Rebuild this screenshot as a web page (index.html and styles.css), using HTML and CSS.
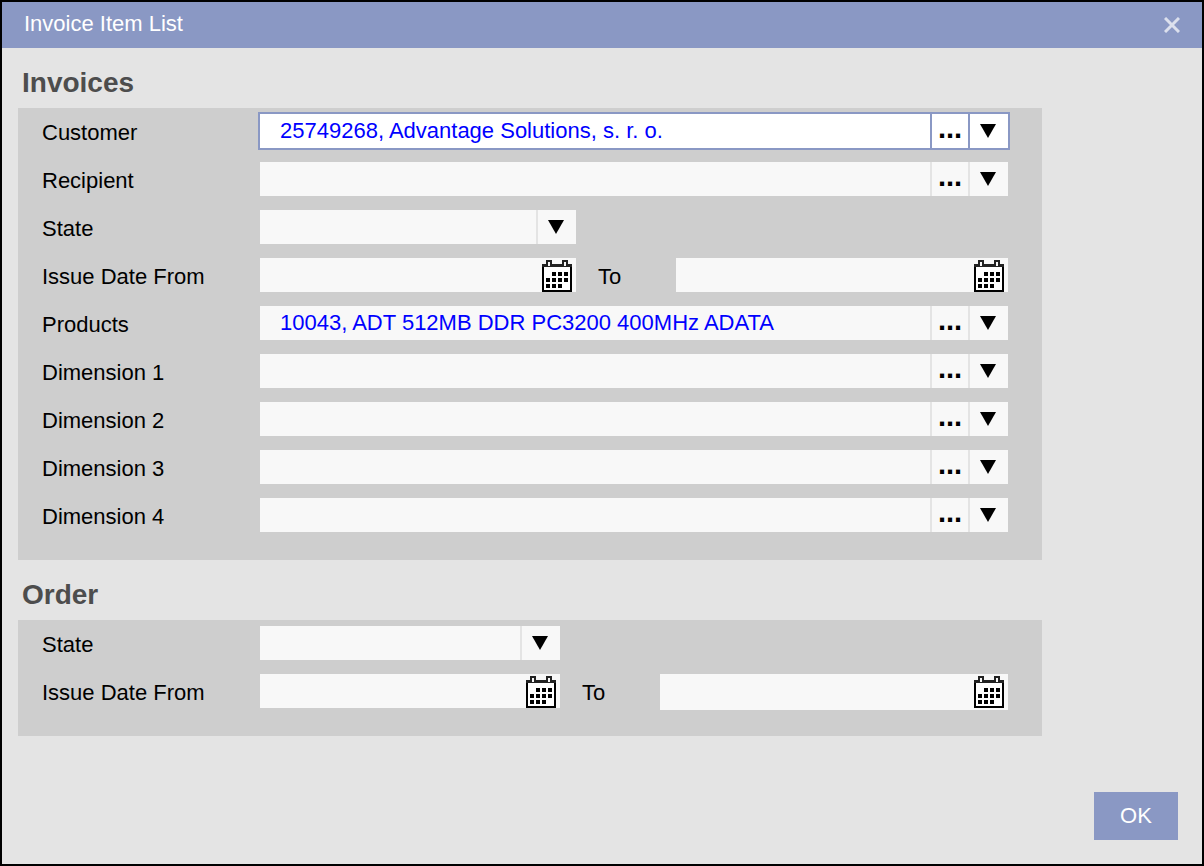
FILE: index.html
```html
<!DOCTYPE html>
<html lang="en">
<head>
<meta charset="utf-8">
<title>Invoice Item List</title>
<link rel="stylesheet" href="styles.css">
</head>
<body>
<svg class="sprites" width="0" height="0" aria-hidden="true">
  <symbol id="cal" viewBox="0 0 30 32">
    <path d="M1 6h28v25H1z" fill="#fff" stroke="#000" stroke-width="2"/>
    <path d="M0 4h30v3H0z" fill="#222"/>
    <path d="M5 6V1h4v5M21 6V1h4v5" fill="#f8f8f8" stroke="#222" stroke-width="2"/>
    <path d="M10 12h4v4h-4zM16 12h4v4h-4zM22 12h4v4h-4zM4 18h4v4H4zM10 18h4v4h-4zM16 18h4v4h-4zM22 18h4v4h-4zM4 24h4v4H4zM10 24h4v4h-4zM16 24h4v4h-4z" fill="#000"/>
  </symbol>
  <symbol id="arrow" viewBox="0 0 16 14">
    <path d="M0 0h16L8 14z" fill="#000"/>
  </symbol>
</svg>
<div class="dialog">
  <header class="titlebar">
    <span class="title">Invoice Item List</span>
    <svg class="close" viewBox="0 0 16 16"><path d="M1 1l14 14M15 1L1 15"/></svg>
  </header>
  <main class="content">
    <h2 class="section-title">Invoices</h2>
    <section class="panel">
      <div class="row">
        <label class="label">Customer</label>
        <div class="field field-full focused">
          <span class="value">25749268, Advantage Solutions, s. r. o.</span>
          <span class="btn dots">...</span>
          <span class="btn arrow"><svg><use href="#arrow"/></svg></span>
        </div>
      </div>
      <div class="row">
        <label class="label">Recipient</label>
        <div class="field field-full">
          <span class="value"></span>
          <span class="btn dots">...</span>
          <span class="btn arrow"><svg><use href="#arrow"/></svg></span>
        </div>
      </div>
      <div class="row">
        <label class="label">State</label>
        <div class="field field-state">
          <span class="value"></span>
          <span class="btn arrow"><svg><use href="#arrow"/></svg></span>
        </div>
      </div>
      <div class="row">
        <label class="label">Issue Date From</label>
        <div class="field field-date">
          <span class="value"></span>
          <svg class="cal"><use href="#cal"/></svg>
        </div>
        <label class="to">To</label>
        <div class="field field-date-to">
          <span class="value"></span>
          <svg class="cal"><use href="#cal"/></svg>
        </div>
      </div>
      <div class="row">
        <label class="label">Products</label>
        <div class="field field-full">
          <span class="value">10043, ADT 512MB DDR PC3200 400MHz ADATA</span>
          <span class="btn dots">...</span>
          <span class="btn arrow"><svg><use href="#arrow"/></svg></span>
        </div>
      </div>
      <div class="row">
        <label class="label">Dimension 1</label>
        <div class="field field-full">
          <span class="value"></span>
          <span class="btn dots">...</span>
          <span class="btn arrow"><svg><use href="#arrow"/></svg></span>
        </div>
      </div>
      <div class="row">
        <label class="label">Dimension 2</label>
        <div class="field field-full">
          <span class="value"></span>
          <span class="btn dots">...</span>
          <span class="btn arrow"><svg><use href="#arrow"/></svg></span>
        </div>
      </div>
      <div class="row">
        <label class="label">Dimension 3</label>
        <div class="field field-full">
          <span class="value"></span>
          <span class="btn dots">...</span>
          <span class="btn arrow"><svg><use href="#arrow"/></svg></span>
        </div>
      </div>
      <div class="row">
        <label class="label">Dimension 4</label>
        <div class="field field-full">
          <span class="value"></span>
          <span class="btn dots">...</span>
          <span class="btn arrow"><svg><use href="#arrow"/></svg></span>
        </div>
      </div>
    </section>
    <h2 class="section-title">Order</h2>
    <section class="panel">
      <div class="row">
        <label class="label">State</label>
        <div class="field field-state-order">
          <span class="value"></span>
          <span class="btn arrow"><svg><use href="#arrow"/></svg></span>
        </div>
      </div>
      <div class="row">
        <label class="label">Issue Date From</label>
        <div class="field field-date-order">
          <span class="value"></span>
          <svg class="cal"><use href="#cal"/></svg>
        </div>
        <label class="to">To</label>
        <div class="field field-date-order-to">
          <span class="value"></span>
          <svg class="cal"><use href="#cal"/></svg>
        </div>
      </div>
    </section>
  </main>
  <footer class="footer">
    <button class="ok" type="button">OK</button>
  </footer>
</div>
</body>
</html>
```
FILE: styles.css
```css
* { box-sizing: border-box; }
html, body { margin: 0; height: 100%; overflow: hidden; }
body { font-family: "Liberation Sans", Arial, sans-serif; font-size: 22px; color: #000; }
.sprites { position: absolute; }

.dialog {
  width: 1204px;
  height: 866px;
  border: 2px solid #000;
  background: #e4e4e4;
  display: flex;
  flex-direction: column;
}
.titlebar {
  height: 46px;
  flex: none;
  background: #8a98c4;
  color: #fff;
  display: flex;
  align-items: center;
  justify-content: space-between;
  padding: 0 22px;
}
.title { line-height: 44px; height: 44px; margin-bottom: 2px; }
.close { width: 16px; height: 16px; fill: none; stroke: #fff; stroke-opacity: .7; stroke-width: 3; }

.content { padding: 0 0 0 16px; }
.section-title {
  margin: 0 0 0 4px;
  height: 60px;
  padding-top: 10px;
  font-size: 28px;
  line-height: 50px;
  font-weight: bold;
  color: #4d4d4d;
}
.panel {
  width: 1024px;
  background: #cecece;
  padding: 6px 0 28px 24px;
  display: flex;
  flex-direction: column;
  gap: 14px;
}
.row { display: flex; height: 34px; align-items: flex-start; }
.label { width: 218px; flex: none; line-height: 38px; }
.to { flex: none; width: 100px; padding-left: 22px; line-height: 38px; }

.field {
  height: 34px;
  background: #f8f8f8;
  display: flex;
  flex: none;
}
.field-full { width: 748px; }
.field-state { width: 316px; }
.field-date { width: 316px; }
.field-date-to { width: 332px; }
.field-state-order { width: 300px; }
.field-date-order { width: 300px; }
.field-date-order-to { width: 348px; height: 36px; }
.focused { background: #fff; outline: 2px solid #8a98c4; }

.value {
  flex: 1;
  min-width: 0;
  padding-left: 20px;
  color: #00f;
  line-height: 34px;
  white-space: nowrap;
}
.btn {
  flex: none;
  height: 34px;
  border-left: 2px solid #e4e4e4;
}
.focused .btn { border-left-color: #8a98c4; }
.dots {
  width: 38px;
  font-size: 29px;
  font-weight: bold;
  line-height: 28px;
  text-align: center;
}
.arrow { width: 40px; padding: 10px 0 0 10px; }
.arrow svg { display: block; width: 16px; height: 14px; }
.cal { flex: none; width: 30px; height: 32px; margin: 2px 4px 0 0; }

.footer {
  margin-top: auto;
  display: flex;
  justify-content: flex-end;
  padding: 0 24px 24px 0;
}
.ok {
  width: 84px;
  height: 48px;
  border: 0;
  padding: 0;
  background: #8a98c4;
  color: #fff;
  font: 22px "Liberation Sans", Arial, sans-serif;
}
```
